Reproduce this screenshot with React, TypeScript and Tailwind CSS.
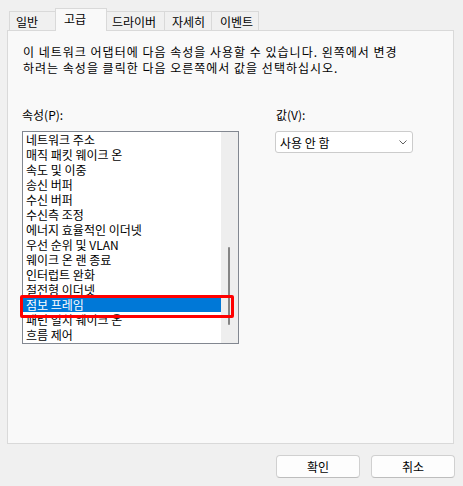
import React from "react";

const FONT = { fontFamily: '"Noto Sans CJK KR", "Noto Sans", sans-serif' };

const tabs = [
  { label: "일반", w: "w-[47px]", pl: "pl-[6px]", sel: false },
  { label: "고급", w: "w-[52px]", pl: "pl-[8px]", sel: true },
  { label: "드라이버", w: "w-[59px]", pl: "pl-[5px]", sel: false },
  { label: "자세히", w: "w-[48px]", pl: "pl-[7px]", sel: false },
  { label: "이벤트", w: "w-[48px]", pl: "pl-[8px]", sel: false },
];

const items = [
  "네트워크 주소",
  "매직 패킷 웨이크 온",
  "속도 및 이중",
  "송신 버퍼",
  "수신 버퍼",
  "수신측 조정",
  "에너지 효율적인 이더넷",
  "우선 순위 및 VLAN",
  "웨이크 온 랜 종료",
  "인터럽트 완화",
  "절전형 이더넷",
  "점보 프레임",
  "패턴 일치 웨이크 온",
  "흐름 제어",
];

export default function App() {
  return (
    <div
      className="w-[463px] h-[486px] bg-[#f0f0f0] flex flex-col pt-[8px] px-[7px] text-[12px] text-black"
      style={FONT}
    >
      {/* Tabs */}
      <div className="flex items-end h-[22px] pl-[2px]">
        {tabs.map((t, i) => (
          <div
            key={t.label}
            className={
              t.sel
                ? `${t.w} ${t.pl} relative z-10 h-[23px] -mb-[1px] bg-[#f9f9f9] border-t border-l border-r border-[#d9d9d9] flex items-center pb-[3px] leading-[15px] ${i > 0 ? "-ml-px" : ""}`
                : `${t.w} ${t.pl} h-[19px] bg-[#f0f0f0] border-t border-l border-r border-[#d9d9d9] flex items-center leading-[15px] ${i > 0 ? "-ml-px" : ""}`
            }
          >
            {t.label}
          </div>
        ))}
      </div>

      {/* Panel */}
      <div className="w-[447px] h-[414px] bg-[#f9f9f9] border border-[#d9d9d9] pl-[14px] pt-[13px]">
        <p className="leading-[16px] pl-[1px] tracking-[1px] whitespace-nowrap">
          이 네트워크 어댑터에 다음 속성을 사용할 수 있습니다. 왼쪽에서 변경
          <br />
          하려는 속성을 클릭한 다음 오른쪽에서 값을 선택하십시오.
        </p>

        <div className="flex mt-[31px]">
          {/* Left column */}
          <div className="w-[217px] flex flex-col">
            <div className="leading-[16px] h-[16px]">속성(P):</div>
            <div className="relative mt-[8px] h-[213px] border border-[#828790] bg-white flex">
              <div className="flex-1 flex flex-col overflow-hidden">
                {items.map((it) => {
                  const sel = it === "점보 프레임";
                  return (
                    <div
                      key={it}
                      className={`h-[15px] shrink-0 leading-[15px] pl-[3px] whitespace-nowrap ${
                        sel ? "bg-[#0078d7] text-white" : ""
                      }`}
                    >
                      {it}
                    </div>
                  );
                })}
              </div>
              <div className="w-[17px] bg-[#eeeeee] flex flex-col pt-[115px] pl-[7px]">
                <div className="w-[2px] h-[78px] rounded-full bg-[#858585]" />
              </div>
              <div className="absolute left-[-3px] top-[163px] w-[214px] h-[23px] border-[3px] border-[#ff0000] rounded-[2px] pointer-events-none" />
            </div>
          </div>

          {/* Right column */}
          <div className="ml-[36px] flex flex-col">
            <div className="leading-[16px] h-[16px] pl-[1px]">값(V):</div>
            <div className="mt-[8px] w-[138px] h-[22px] bg-white border border-[#cccccc] rounded-[3px] flex items-center justify-between pl-[4px] pr-[5px] leading-[15px]">
              <span>사용 안 함</span>
              <svg width="8" height="5" viewBox="0 0 8 5" fill="none">
                <path d="M0.5 0.5 L4 4 L7.5 0.5" stroke="#606060" strokeWidth="1" />
              </svg>
            </div>
          </div>
        </div>
      </div>

      {/* Buttons */}
      <div className="flex justify-end gap-[11px] mt-[11px] pr-[1px]">
        <button className="w-[84px] h-[23px] bg-[#fdfdfd] border border-[#d0d0d0] border-b-[#bdbdbd] rounded-[4px] text-[12px] leading-[15px]">
          확인
        </button>
        <button className="w-[84px] h-[23px] bg-[#fdfdfd] border border-[#d0d0d0] border-b-[#bdbdbd] rounded-[4px] text-[12px] leading-[15px]">
          취소
        </button>
      </div>
    </div>
  );
}
